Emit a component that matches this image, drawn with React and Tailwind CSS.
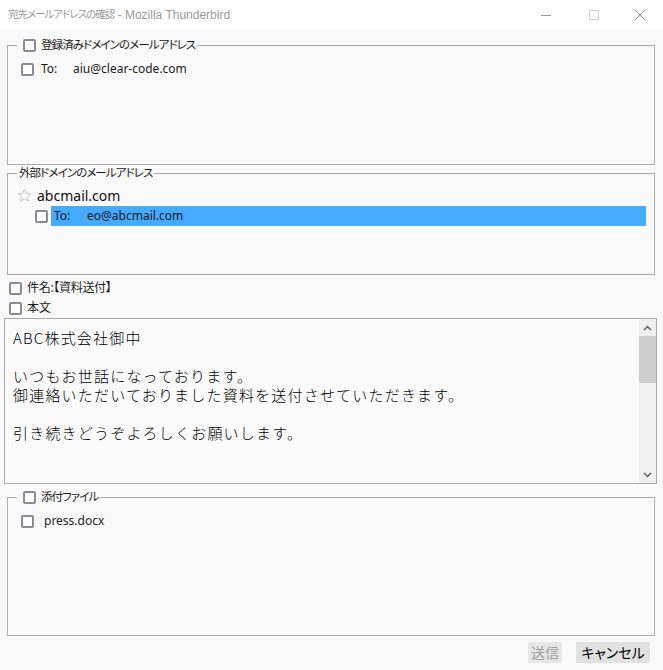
import React from 'react';

const ui = "font-['Noto_Sans','Noto_Sans_CJK_JP',sans-serif] [font-feature-settings:'palt']";
const jp = 'text-[11.5px] tracking-[-0.9px]';

function Box({ className = '' }) {
  return (
    <span
      className={
        'inline-block w-[13px] h-[13px] shrink-0 rounded-[2px] border-2 border-[#8b8b96] bg-white ' +
        className
      }
    />
  );
}

function Star() {
  return (
    <svg width="15" height="15" viewBox="0 0 24 24" fill="none" stroke="#c6c6c6" strokeWidth="1.6" strokeLinejoin="round">
      <polygon points="12,2 14.9,8.6 22,9.3 16.6,14.1 18.2,21.2 12,17.5 5.8,21.2 7.4,14.1 2,9.3 9.1,8.6" />
    </svg>
  );
}

function Legend({ children }) {
  return (
    <legend className="ml-[9px] px-[2px]">
      <span className="flex items-center h-4 leading-4 text-[12px] text-[#1b1b1b]">{children}</span>
    </legend>
  );
}

export default function App() {
  return (
    <div className={'w-[663px] h-[670px] bg-[#f9f9f9] flex flex-col overflow-hidden text-[12px] text-[#1b1b1b] ' + ui}>
      {/* title bar */}
      <div className="h-[29px] bg-white flex items-center pl-[8px] shrink-0">
        <span className="flex-1 flex items-center text-[#9a9a9a]">
          <span className="text-[10.5px] tracking-[-1px]">宛先メールアドレスの確認</span>
          <span className="text-[12px] font-['Liberation_Sans',sans-serif] whitespace-pre"> - Mozilla Thunderbird</span>
        </span>
        <svg width="12" height="12" viewBox="0 0 12 12" className="mr-[36px]">
          <line x1="1" y1="6.5" x2="11" y2="6.5" stroke="#9a9a9a" strokeWidth="1" />
        </svg>
        <svg width="12" height="12" viewBox="0 0 12 12" className="mr-[34px]">
          <rect x="1.5" y="1.5" width="9" height="9" fill="none" stroke="#d0d0d0" strokeWidth="1" />
        </svg>
        <svg width="12" height="12" viewBox="0 0 12 12" className="mr-[17px]">
          <path d="M1 1 L11 11 M11 1 L1 11" stroke="#9a9a9a" strokeWidth="1" />
        </svg>
      </div>

      <div className="flex-1 flex flex-col pl-[7px] pr-[8px] pt-[8px]">
        {/* registered domains */}
        <fieldset className="h-[128px] border border-[#adadad] shrink-0">
          <Legend>
            <Box className="ml-[4px]" />
            <span className={'ml-[5px] ' + jp}>登録済みドメインのメールアドレス</span>
          </Legend>
          <div className="pl-[13px] pt-2">
            <div className="flex items-center h-4">
              <Box />
              <span className="ml-[7px] w-[32px]">To:</span>
              <span>aiu@clear-code.com</span>
            </div>
          </div>
        </fieldset>

        {/* external domains */}
        <fieldset className="h-[110px] border border-[#adadad] shrink-0">
          <Legend>
            <span className={jp}>外部ドメインのメールアドレス</span>
          </Legend>
          <div className="pl-[9px] pr-[8px] pt-[4px]">
            <div className="flex items-center h-5">
              <Star />
              <span className="ml-[5px] text-[14px] text-[#111]">abcmail.com</span>
            </div>
            <div className="flex items-center h-5 mt-[1px]">
              <Box className="ml-[18px]" />
              <div className="ml-[3px] flex-1 h-5 bg-[#46aaff] flex items-center pl-[3px]">
                <span className="w-[33px]">To:</span>
                <span>eo@abcmail.com</span>
              </div>
            </div>
          </div>
        </fieldset>

        <div className="flex items-center h-4 mt-[5px] pl-[2px]">
          <Box />
          <span className="ml-[5px] text-[12px] tracking-[-0.3px]">件名:【資料送付】</span>
        </div>
        <div className="flex items-center h-4 mt-[4px] pl-[2px]">
          <Box />
          <span className="ml-[5px] text-[12px]">本文</span>
        </div>

        {/* body text */}
        <div className="mt-[2px] -ml-[3px] w-[653px] h-[166px] border border-[#ababab] bg-[#fafafa] flex shrink-0">
          <div className="flex-1 pl-[8px] pt-[9px] text-[15px] tracking-[1.2px] leading-[19px] font-light text-black font-['Noto_Sans_CJK_JP',monospace] [font-feature-settings:normal]">
            <div>ABC株式会社御中</div>
            <div>&nbsp;</div>
            <div>いつもお世話になっております。</div>
            <div>御連絡いただいておりました資料を送付させていただきます。</div>
            <div>&nbsp;</div>
            <div>引き続きどうぞよろしくお願いします。</div>
          </div>
          <div className="w-[17px] bg-[#f0f0f0] flex flex-col">
            <div className="h-[17px] flex items-center justify-center">
              <svg width="9" height="6" viewBox="0 0 9 6">
                <path d="M1 5 L4.5 1.5 L8 5" fill="none" stroke="#606060" strokeWidth="1.5" />
              </svg>
            </div>
            <div className="h-[47px] bg-[#cdcdcd]" />
            <div className="flex-1" />
            <div className="h-[17px] flex items-center justify-center">
              <svg width="9" height="6" viewBox="0 0 9 6">
                <path d="M1 1 L4.5 4.5 L8 1" fill="none" stroke="#606060" strokeWidth="1.5" />
              </svg>
            </div>
          </div>
        </div>

        {/* attachments */}
        <fieldset className="mt-[5px] h-[147px] border border-[#adadad] shrink-0">
          <Legend>
            <Box className="ml-[4px]" />
            <span className={'ml-[5px] ' + jp}>添付ファイル</span>
          </Legend>
          <div className="pl-[13px] pt-2">
            <div className="flex items-center h-4">
              <Box />
              <span className="ml-[10px]">press.docx</span>
            </div>
          </div>
        </fieldset>

        <div className="mt-[6px] mr-[5px] flex justify-end gap-[14px]">
          <button className="h-[21px] w-[34px] bg-[#e6e6e6] text-[14px] text-[#a0a0a0] flex items-center justify-center">送信</button>
          <button className="h-[21px] w-[74px] bg-[#e1e1e1] text-[14px] text-black flex items-center justify-center">キャンセル</button>
        </div>
      </div>
    </div>
  );
}
